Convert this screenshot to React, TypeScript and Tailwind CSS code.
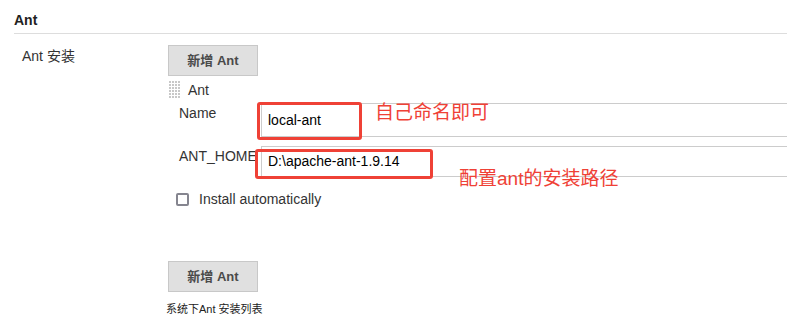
import React from "react";

const SANS = "font-['Liberation_Sans','Noto_Sans_CJK_SC',sans-serif]";

function Grip() {
  const dots = [];
  for (let r = 0; r < 6; r++) {
    for (let c = 0; c < 4; c++) {
      dots.push(<rect key={`${r}-${c}`} x={c * 3} y={r * 3} width={2} height={2} fill="#c8c8c8" />);
    }
  }
  return (
    <svg width="12" height="18" viewBox="0 0 12 18" className="block">
      {dots}
    </svg>
  );
}

function AddButton() {
  return (
    <button className="w-[90px] h-[31px] bg-[#e0e0e0] border border-[#c8c8c8] text-[13px] font-bold text-[#4a4a4a] leading-none">
      新增 Ant
    </button>
  );
}

export default function App() {
  return (
    <div className={`relative w-[787px] h-[332px] bg-white overflow-hidden text-[#333] ${SANS}`}>
      {/* Section header */}
      <div className="ml-[14px] pt-[10px] pb-[3px] leading-[20px] text-[14px] font-bold text-[#222] border-b border-[#ddd]">
        Ant
      </div>

      <div className="flex items-start mt-[11px]">
        <div className="w-[168px] pl-[22px] pt-[1px] text-[14px] leading-[20px]">Ant 安装</div>

        <div className="flex-1 flex flex-col">
          <AddButton />

          {/* Installation entry */}
          <div className="flex items-center h-[18px] mt-[5px]">
            <div className="ml-[1px]"><Grip /></div>
            <span className="ml-[7px] text-[14px] leading-[18px]">Ant</span>
          </div>

          <div className="flex items-start pl-[11px] mt-[4px]">
            <div className="w-[82px] text-[14px] leading-[20px]">Name</div>
            <div className="flex-1 h-[34px] border border-r-0 border-[#ccc] px-[6px] flex items-center text-[14px] text-black">
              local-ant
            </div>
          </div>

          <div className="flex items-start pl-[11px] mt-[9px]">
            <div className="w-[82px] text-[14px] leading-[20px] whitespace-nowrap">ANT_HOME</div>
            <div className="relative flex-1 h-[31px] border border-r-0 border-[#ccc] px-[6px] flex items-center text-[14px] text-black">
              D:\apache-ant-1.9.14
            </div>
          </div>

          <div className="flex items-center h-[20px] mt-[12px] pl-[8px]">
            <span className="w-[13px] h-[13px] border-2 border-[#85858f] rounded-[2px] bg-white" />
            <span className="ml-[10px] text-[14px] leading-[20px]">Install automatically</span>
          </div>

          <div className="mt-[52px]">
            <AddButton />
          </div>
          <div className="mt-[10px] -ml-[2px] text-[11px] leading-[14px] text-[#222]">系统下Ant 安装列表</div>
        </div>
      </div>

      {/* Red annotations drawn over the form */}
      <div className="absolute left-[257px] top-[102px] w-[105px] h-[38px] border-[3px] border-[#ef4136] rounded-[3px]" />
      <div className="absolute left-[375px] top-[101px] text-[19px] leading-[24px] text-[#ef4136]">自己命名即可</div>
      <div className="absolute left-[255px] top-[149px] w-[178px] h-[30px] border-[3px] border-[#ef4136] rounded-[3px]" />
      <div className="absolute left-[459px] top-[167px] text-[19px] leading-[24px] text-[#ef4136]">配置ant的安装路径</div>
    </div>
  );
}
